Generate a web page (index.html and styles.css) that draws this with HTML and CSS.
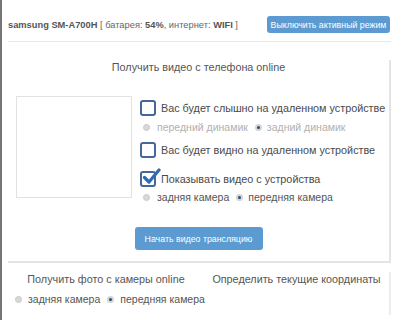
FILE: index.html
```html
<!DOCTYPE html>
<html lang="ru">
<head>
    <meta charset="UTF-8">
    <title>Удаленное устройство</title>
    <link rel="stylesheet" href="styles.css">
</head>
<body>
<div class="page">

    <div class="topbar">
        <div class="device"><b>samsung SM-A700H</b> [ батарея: <b>54%</b>, интернет: <b>WIFI</b> ]</div>
        <button class="btn btn-small">Выключить активный режим</button>
    </div>
    <div class="divider"></div>

    <div class="panel">
        <div class="panel-title">Получить видео с телефона online</div>
        <div class="video-row">
            <div class="preview"></div>
            <div class="options">
                <label class="check"><span class="box"></span>Вас будет слышно на удаленном устройстве</label>
                <div class="radios disabled first">
                    <span class="radio"></span>передний динамик
                    <span class="radio on"></span>задний динамик
                </div>
                <label class="check second"><span class="box"></span>Вас будет видно на удаленном устройстве</label>
                <label class="check third">
                    <span class="box checked">
                        <svg width="20" height="20" viewBox="0 0 20 20"><path d="M3.5 10.5 L8 15 L18 3" fill="none" stroke="#2c6cb5" stroke-width="3.2" stroke-linecap="round" stroke-linejoin="round"/></svg>
                    </span>Показывать видео с устройства
                </label>
                <div class="radios last">
                    <span class="radio"></span>задняя камера
                    <span class="radio on"></span>передняя камера
                </div>
            </div>
        </div>
        <div class="actions">
            <button class="btn btn-big">Начать видео трансляцию</button>
        </div>
    </div>

    <div class="bottom">
        <div class="col">
            <div class="col-title">Получить фото с камеры online</div>
            <div class="radios">
                <span class="radio"></span>задняя камера
                <span class="radio on"></span>передняя камера
            </div>
        </div>
        <div class="col col-right">
            <div class="col-title">Определить текущие координаты</div>
        </div>
    </div>

</div>
</body>
</html>
```

FILE: styles.css
```css
body {
    margin: 0;
    font-family: 'Liberation Sans', Arial, sans-serif;
    color: #555;
    background-color: #fff;
    white-space: nowrap;
}

.page {
    border-left: 2px solid #777;
    min-height: 320px;
    box-sizing: border-box;
    padding: 16px 9px 0 6px;
}

.topbar {
    display: flex;
    justify-content: space-between;
    align-items: center;
    height: 17px;
}

.device {
    font-size: 9.3px;
    color: #666;
}

.device b {
    color: #555;
}

.btn {
    border: none;
    border-radius: 3px;
    background-color: #5b9bd1;
    color: #fff;
    font-family: 'Liberation Sans', Arial, sans-serif;
    cursor: pointer;
    white-space: nowrap;
}

.btn-small {
    height: 17px;
    width: 123px;
    padding: 0;
    font-size: 8.8px;
    margin-right: 1px;
}

.btn-big {
    height: 23px;
    width: 128px;
    padding: 0;
    font-size: 8.8px;
}

.divider {
    height: 1px;
    background-color: #e8e8e8;
    margin-top: 8px;
}

.panel {
    margin-top: 18px;
    border-right: 2px solid #e4e4e4;
    border-bottom: 2px solid #e4e4e4;
    height: 201px;
}

.panel-title {
    text-align: center;
    font-size: 10.8px;
    line-height: 13px;
    padding-top: 1px;
}

.video-row {
    display: flex;
    align-items: flex-start;
    margin-top: 22px;
}

.preview {
    width: 114px;
    height: 100px;
    border: 1px solid #e2e2e2;
    margin-left: 8px;
}

.options {
    margin-left: 8px;
    font-size: 10.8px;
    color: #4a4a4a;
}

.check {
    display: flex;
    align-items: center;
    height: 16px;
    margin-top: 4px;
}

.check.second {
    margin-top: 9px;
}

.check.third {
    margin-top: 13px;
}

.box {
    position: relative;
    width: 12px;
    height: 12px;
    border: 2px solid #44689a;
    border-radius: 3px;
    margin-right: 5px;
    flex: none;
}

.box svg {
    position: absolute;
    left: -1px;
    top: -6px;
}

.radios {
    display: flex;
    align-items: center;
    font-size: 10.5px;
    color: #555;
    height: 12px;
    margin-top: 5px;
    margin-left: 3px;
}

.radios.last {
    margin-top: 4px;
}

.radios.disabled {
    color: #b0b0b0;
}

.radio {
    box-sizing: border-box;
    width: 7px;
    height: 7px;
    border-radius: 50%;
    background-color: #d8d8d8;
    border: 1px solid #c8c8c8;
    margin-right: 7px;
    flex: none;
}

.radio.on {
    background-color: #244f78;
    border: 2px solid #d4d4d4;
    margin-left: 7px;
    margin-right: 5px;
}

.actions {
    text-align: center;
    margin-top: 24px;
}

.bottom {
    display: flex;
    margin-top: 9px;
}

.col {
    width: 196px;
}

.col-right {
    flex: 1;
    border-right: 2px solid #ececec;
    height: 43px;
}

.col-title {
    text-align: center;
    font-size: 10.8px;
    line-height: 13px;
    margin-top: 1px;
}

.bottom .radios {
    margin-left: 7px;
    margin-top: 7px;
}

.bottom .radio {
    margin-right: 6px;
}

.bottom .radio.on {
    margin-left: 7px;
}
```
